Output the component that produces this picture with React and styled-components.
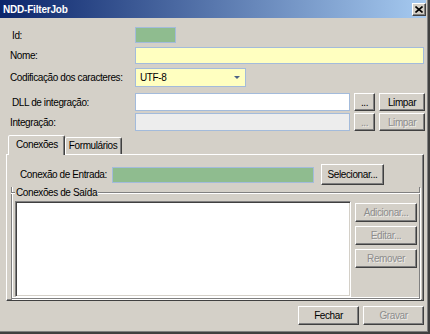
import React from "react";
import styled, { createGlobalStyle, css } from "styled-components";

const GlobalStyle = createGlobalStyle`
  html, body {
    margin: 0;
    padding: 0;
    background: #d4d0c8;
  }
  body {
    font-family: "Liberation Sans", Arial, sans-serif;
    font-size: 10px;
    letter-spacing: -0.4px;
    color: #000;
  }
`;

const raised = css`
  border: 1px solid;
  border-color: #ffffff #404040 #404040 #ffffff;
  box-shadow: inset -1px -1px 0 #808080;
`;

const Window = styled.div`
  width: 430px;
  height: 334px;
  box-sizing: border-box;
  background: #d4d0c8;
  border-right: 2px solid #404040;
  border-bottom: 2px solid #404040;
  box-shadow: inset -1px -1px 0 #808080;
  padding: 0 2px 1px 0;
  display: flex;
  flex-direction: column;
`;

const TitleBar = styled.div`
  height: 18px;
  flex: none;
  display: flex;
  align-items: center;
  justify-content: space-between;
  background: linear-gradient(to right, #0a246a, #a6caf0);
  padding-left: 3px;
`;

const Title = styled.span`
  color: #fff;
  font-weight: bold;
  font-size: 10px;
  letter-spacing: -0.2px;
`;

const CloseButton = styled.div`
  ${raised}
  width: 12px;
  height: 11px;
  background: #d4d0c8;
  display: flex;
  align-items: center;
  justify-content: center;
`;

const Body = styled.div`
  flex: 1;
  display: flex;
  flex-direction: column;
  padding: 0 2px 0 6px;
`;

const Row = styled.div`
  display: flex;
  align-items: center;
  height: ${(p) => p.$h}px;
  margin-top: ${(p) => p.$top}px;
`;

const Label = styled.label`
  width: ${(p) => p.$w || 129}px;
  flex: none;
  box-sizing: border-box;
  padding-left: ${(p) => 4 + (p.$indent || 0)}px;
  white-space: nowrap;
`;

const fills = {
  green: "#8fbc8f",
  yellow: "#ffffc0",
  white: "#ffffff",
  disabled: "#ededed",
};

const Field = styled.div`
  box-sizing: border-box;
  height: ${(p) => p.$h || 18}px;
  width: ${(p) => (p.$w ? `${p.$w}px` : "auto")};
  flex: ${(p) => (p.$w ? "none" : "1")};
  background: ${(p) => fills[p.$fill || "white"]};
  border: 1px solid #a3bbdb;
  display: flex;
  align-items: center;
  padding-left: 4px;
`;

const Arrow = styled.div`
  margin-left: auto;
  margin-right: 5px;
  width: 0;
  height: 0;
  border-left: 3px solid transparent;
  border-right: 3px solid transparent;
  border-top: 3px solid #4d6185;
`;

const Button = styled.button`
  ${raised}
  box-sizing: border-box;
  flex: none;
  width: ${(p) => p.$w}px;
  height: ${(p) => p.$h || 19}px;
  margin-left: ${(p) => p.$ml || 0}px;
  background: #d4d0c8;
  font: inherit;
  letter-spacing: -0.4px;
  padding: 0;
  color: ${(p) => (p.disabled ? "#8d8d8d" : "#000")};
  text-shadow: ${(p) => (p.disabled ? "1px 1px 0 rgba(255,255,255,0.6)" : "none")};
`;

const TabStrip = styled.div`
  display: flex;
  align-items: flex-end;
  height: 19px;
  margin-top: 4px;
  padding-left: 2px;
  position: relative;
  z-index: 1;
`;

const Tab = styled.div`
  box-sizing: border-box;
  height: ${(p) => (p.$active ? 20 : 17)}px;
  margin-bottom: ${(p) => (p.$active ? -1 : 0)}px;
  padding: ${(p) => (p.$active ? "3px 6px 0 7px" : "2px 4px 0 3px")};
  background: #d4d0c8;
  border: 1px solid;
  border-bottom: none;
  border-color: #ffffff #404040 transparent #ffffff;
  box-shadow: inset -1px 0 0 #808080;
  border-radius: 2px 2px 0 0;
  white-space: nowrap;
`;

const Panel = styled.div`
  box-sizing: border-box;
  height: 147px;
  border: 1px solid;
  border-color: #ffffff #404040 #404040 #ffffff;
  box-shadow: inset -1px -1px 0 #808080;
  display: flex;
  flex-direction: column;
  padding: 9px 2px 2px 2px;
`;

const EntradaRow = styled.div`
  display: flex;
  align-items: center;
  height: 21px;
`;

const Group = styled.div`
  flex: 1;
  display: flex;
  flex-direction: column;
  margin: 2px 1px 1px 2px;
  border: 1px solid;
  border-top: none;
  border-color: transparent #808080 #808080 #808080;
  box-shadow: 1px 1px 0 #ffffff, inset 1px -1px 0 #ffffff;
`;

const GroupHeader = styled.div`
  display: flex;
  align-items: center;
  height: 11px;
  margin: 0 -1px;
`;

const EtchLine = styled.div`
  height: 1px;
  background: #808080;
  box-shadow: 0 1px 0 #ffffff;
  flex: ${(p) => (p.$grow ? 1 : "none")};
  width: ${(p) => (p.$grow ? "auto" : "4px")};
`;

const GroupTitle = styled.span`
  padding: 0 1px;
  white-space: nowrap;
`;

const GroupContent = styled.div`
  flex: 1;
  display: flex;
  padding: 3px 2px 1px 3px;
  gap: 4px;
`;

const ListBox = styled.div`
  box-sizing: border-box;
  width: 337px;
  height: 96px;
  background: #fff;
  border: 1px solid;
  border-color: #808080 #ffffff #ffffff #808080;
  box-shadow: inset 1px 1px 0 #404040, inset -1px -1px 0 #d4d0c8;
`;

const SideButtons = styled.div`
  display: flex;
  flex-direction: column;
  gap: 4px;
  padding-top: 2px;
`;

const Footer = styled.div`
  display: flex;
  justify-content: flex-end;
  gap: 4px;
  margin-top: 5px;
`;

function CloseIcon() {
  return (
    <svg width="8" height="7" viewBox="0 0 8 7">
      <path d="M0.5 0.5 L7.5 6.5 M7.5 0.5 L0.5 6.5" stroke="#000" strokeWidth="1.6" />
    </svg>
  );
}

export default function App() {
  return (
    <>
      <GlobalStyle />
      <Window>
        <TitleBar>
          <Title>NDD-FilterJob</Title>
          <CloseButton>
            <CloseIcon />
          </CloseButton>
        </TitleBar>
        <Body>
          <Row $top={9} $h={16}>
            <Label $indent={2}>Id:</Label>
            <Field $w={41} $h={16} $fill="green" />
          </Row>
          <Row $top={4} $h={17}>
            <Label>Nome:</Label>
            <Field $h={17} $fill="yellow" />
          </Row>
          <Row $top={4} $h={19}>
            <Label>Codificação dos caracteres:</Label>
            <Field $w={111} $h={19} $fill="yellow">
              UTF-8
              <Arrow />
            </Field>
          </Row>
          <Row $top={6} $h={18}>
            <Label $indent={2}>DLL de integração:</Label>
            <Field $w={215} $h={18} />
            <Button $w={21} $h={18} $ml={4}>...</Button>
            <Button $w={46} $h={18} $ml={4}>Limpar</Button>
          </Row>
          <Row $top={2} $h={18}>
            <Label>Integração:</Label>
            <Field $w={215} $h={18} $fill="disabled" />
            <Button $w={21} $h={18} $ml={4} disabled>...</Button>
            <Button $w={46} $h={18} $ml={4} disabled>Limpar</Button>
          </Row>

          <TabStrip>
            <Tab $active>Conexões</Tab>
            <Tab>Formulários</Tab>
          </TabStrip>
          <Panel>
            <EntradaRow>
              <Label $w={103} $indent={7}>Conexão de Entrada:</Label>
              <Field $w={202} $h={16} $fill="green" />
              <Button $w={63} $h={21} $ml={7}>Selecionar...</Button>
            </EntradaRow>
            <Group>
              <GroupHeader>
                <EtchLine />
                <GroupTitle>Conexões de Saída</GroupTitle>
                <EtchLine $grow />
              </GroupHeader>
              <GroupContent>
                <ListBox />
                <SideButtons>
                  <Button $w={62} $h={19} disabled>Adicionar...</Button>
                  <Button $w={62} $h={19} disabled>Editar...</Button>
                  <Button $w={62} $h={19} disabled>Remover</Button>
                </SideButtons>
              </GroupContent>
            </Group>
          </Panel>
          <Footer>
            <Button $w={61} $h={19}>Fechar</Button>
            <Button $w={61} $h={19} disabled>Gravar</Button>
          </Footer>
        </Body>
      </Window>
    </>
  );
}
